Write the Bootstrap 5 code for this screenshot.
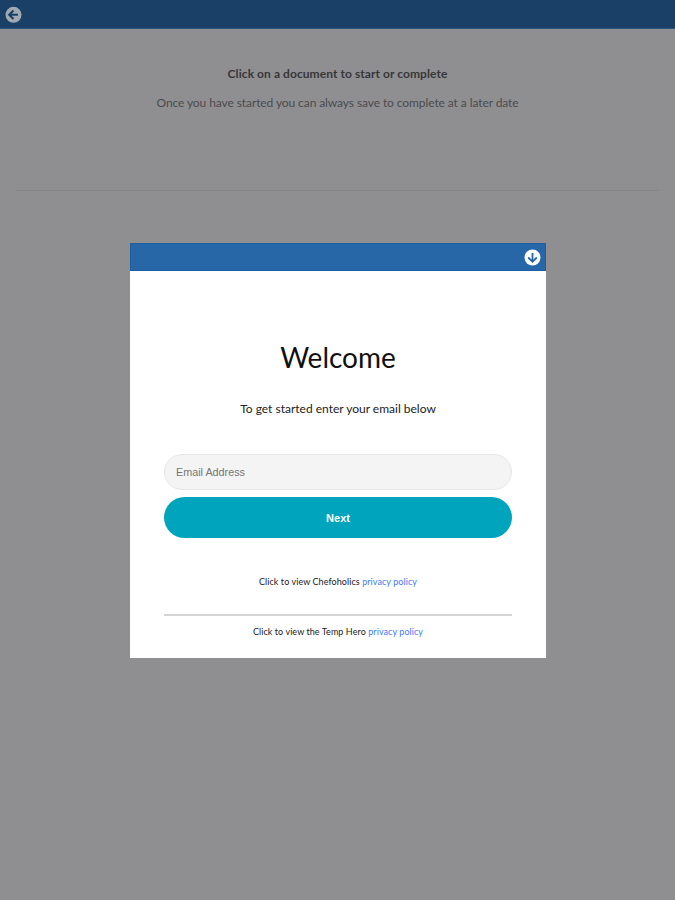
<!DOCTYPE html>
<html lang="en">
<head>
<meta charset="utf-8">
<meta name="viewport" content="width=device-width, initial-scale=1">
<title>Documents</title>
<link href="https://cdn.jsdelivr.net/npm/bootstrap@5.3.0/dist/css/bootstrap.min.css" rel="stylesheet">
<style>
body{font-family:Lato,sans-serif;background:#8f8f91;color:#4b4b4e;font-size:12px;line-height:18px;height:900px;overflow:hidden}
.topbar{height:29px;background:#1a4068;padding-left:5px;border-bottom:1px solid #2a5582}
.intro{padding-top:36px;height:161px}
.intro p{margin-bottom:11px;letter-spacing:-.09px}
.intro .fw-bold{letter-spacing:.07px;color:#37373a}
.rule{height:1px;background:#858588}
.dialog-box{width:416px;height:415px;background:#fff;left:130px;top:243px;color:#222}
.dialog-bar{height:28px;background:#2767a8;padding-right:4px;border:1px solid #1c60a3}
.dialog-main{padding:0 34px}
.welcome{font-size:28px;line-height:36px;margin-top:68px;margin-bottom:25px;font-weight:400;color:#111}
.email{height:36px;background:#f4f4f4;border:1px solid #e6e6e6;border-radius:18px;font:10.8px "Liberation Sans",Arial,sans-serif;padding:0 12px 1px 11px;margin-top:36px}
.email::placeholder{color:#777}
.next{height:41px;border-radius:21px;background:#00a4bd;color:#fff;font:bold 11px "Liberation Sans",Arial,sans-serif;margin-top:7px}
.policy{font-size:9px;line-height:14px;letter-spacing:.07px}
.policy a{color:#3d7bff;text-decoration:none}
.chef{margin-top:37px}
.line{height:2px;background:#d4d4d4;margin:25px 0 9px}
</style>
</head>
<body>
<header class="topbar d-flex align-items-center">
<svg width="17" height="17" viewBox="0 0 17 17"><circle cx="8.500" cy="8.800" r="8" fill="#a3a9b0"/><path d="M13 8.800H4.500M8.500 4.500L4.200 8.800l4.300 4.300" fill="none" stroke="#1a4068" stroke-width="2.1"/></svg>
</header>
<main class="px-3">
<div class="intro text-center"><p class="fw-bold">Click on a document to start or complete</p><p>Once you have started you can always save to complete at a later date</p></div>
<div class="rule"></div>
</main>
<section class="dialog-box position-absolute" role="dialog">
<div class="dialog-bar d-flex align-items-center justify-content-end">
<svg width="17" height="17" viewBox="0 0 17 17"><circle cx="8.500" cy="8.500" r="8" fill="#fff"/><path d="M8.500 4v8.500M4.200 8.500l4.300 4.300 4.300-4.300" fill="none" stroke="#2767a8" stroke-width="1.8"/></svg>
</div>
<div class="dialog-main text-center">
<h1 class="welcome">Welcome</h1>
<p class="mb-0">To get started enter your email below</p>
<input class="email form-control" type="email" placeholder="Email Address">
<button class="next btn w-100 p-0 border-0">Next</button>
<p class="policy chef mb-0">Click to view Chefoholics <a href="#">privacy policy</a></p>
<div class="line"></div>
<p class="policy mb-0">Click to view the Temp Hero <a href="#">privacy policy</a></p>
</div>
</section>
<script src="https://cdn.jsdelivr.net/npm/bootstrap@5.3.0/dist/js/bootstrap.bundle.min.js"></script>
</body>
</html>
